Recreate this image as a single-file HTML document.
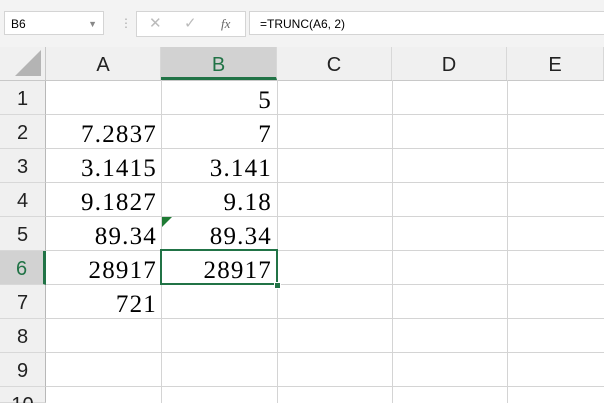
<html style="overflow:hidden;height:403px"><head><style>
body{margin:0;width:604px;height:403px;overflow:hidden;background:#fff;font-family:"Liberation Sans",sans-serif;position:relative}
.top{position:absolute;left:0;top:0;width:604px;height:47px;background:#f3f3f3}
.box{position:absolute;background:#fff;border:1px solid #d4d4d4;height:24px;top:11px;font-size:12px;line-height:24px}
.hdr{position:absolute;top:47px;height:33px;background:#f0f0f0;border-bottom:1px solid #c8c8c8;width:604px}
.ch{position:absolute;top:47px;height:33px;line-height:36px;text-align:center;font-size:20px;color:#222;border-right:1px solid #d8d8d8;box-sizing:border-box}
.rh{position:absolute;left:0;width:46px;height:34px;line-height:36px;text-align:center;font-size:20px;color:#222;background:#f0f0f0;border-bottom:1px solid #d8d8d8;border-right:1px solid #b8b8b8;box-sizing:border-box}
.vl{position:absolute;top:80px;height:323px;width:1px;background:#d4d4d4}
.hl{position:absolute;left:46px;right:0;height:1px;background:#d4d4d4}
.n{position:absolute;font-family:"Liberation Serif",serif;font-size:25px;letter-spacing:1.2px;text-align:right;height:34px;line-height:40px}
</style></head><body>
<div class="top"></div>
<div class="box" style="left:4px;width:100px;padding-left:6px;box-sizing:border-box">B6<span style="position:absolute;right:6px;top:0;color:#888;font-size:9px">▼</span></div>
<div style="position:absolute;left:120px;top:16px;color:#aaa;font-size:12px">⋮</div>
<div class="box" style="left:136px;width:108px;color:#bbb;font-size:15px"><span style="position:absolute;left:12px">✕</span><span style="position:absolute;left:47px">✓</span><span style="position:absolute;left:84px;color:#666;font-family:'Liberation Serif';font-style:italic;font-size:13px">fx</span></div>
<div class="box" style="left:249px;width:360px;padding-left:10px;box-sizing:border-box">=TRUNC(A6, 2)</div>
<div class="hdr"></div>
<div style="position:absolute;left:0;top:47px;width:46px;height:33px;border-right:1px solid #c8c8c8;box-sizing:border-box"><div style="position:absolute;right:4px;bottom:4px;width:0;height:0;border-left:26px solid transparent;border-bottom:26px solid #b4b4b4"></div></div>
<div class="ch" style="left:46px;width:115px">A</div>
<div class="ch" style="left:161px;width:116px;background:#d2d2d2;color:#217346;border-bottom:3px solid #217346">B</div>
<div class="ch" style="left:277px;width:115px">C</div>
<div class="ch" style="left:392px;width:115px">D</div>
<div class="ch" style="left:507px;width:97px">E</div>
<div class="vl" style="left:161px"></div><div class="vl" style="left:277px"></div><div class="vl" style="left:392px"></div><div class="vl" style="left:507px"></div>
<div class="hl" style="top:114px"></div><div class="hl" style="top:148px"></div><div class="hl" style="top:182px"></div><div class="hl" style="top:216px"></div><div class="hl" style="top:250px"></div><div class="hl" style="top:284px"></div><div class="hl" style="top:318px"></div><div class="hl" style="top:352px"></div><div class="hl" style="top:386px"></div>
<div class="rh" style="top:81px">1</div><div class="rh" style="top:115px">2</div><div class="rh" style="top:149px">3</div><div class="rh" style="top:183px">4</div><div class="rh" style="top:217px">5</div>
<div class="rh" style="top:251px;background:#d2d2d2;color:#217346;border-right:3px solid #217346">6</div>
<div class="rh" style="top:285px">7</div><div class="rh" style="top:319px">8</div><div class="rh" style="top:353px">9</div><div class="rh" style="top:387px;height:16px">10</div>
<div class="n" style="left:46px;width:111px;top:115px">7.2837</div>
<div class="n" style="left:46px;width:111px;top:149px">3.1415</div>
<div class="n" style="left:46px;width:111px;top:183px">9.1827</div>
<div class="n" style="left:46px;width:111px;top:217px">89.34</div>
<div class="n" style="left:46px;width:111px;top:251px">28917</div>
<div class="n" style="left:46px;width:111px;top:285px">721</div>
<div class="n" style="left:161px;width:111px;top:81px">5</div>
<div class="n" style="left:161px;width:111px;top:115px">7</div>
<div class="n" style="left:161px;width:111px;top:149px">3.141</div>
<div class="n" style="left:161px;width:111px;top:183px">9.18</div>
<div class="n" style="left:161px;width:111px;top:217px">89.34</div>
<div class="n" style="left:161px;width:111px;top:251px">28917</div>
<div style="position:absolute;left:162px;top:217px;width:0;height:0;border-top:10px solid #1e7b34;border-right:10px solid transparent"></div>
<div style="position:absolute;left:160px;top:249px;width:118px;height:36px;border:2px solid #217346;box-sizing:border-box"></div>
<div style="position:absolute;left:274px;top:282px;width:5px;height:5px;background:#217346;border:1px solid #fff"></div>
</body></html>
